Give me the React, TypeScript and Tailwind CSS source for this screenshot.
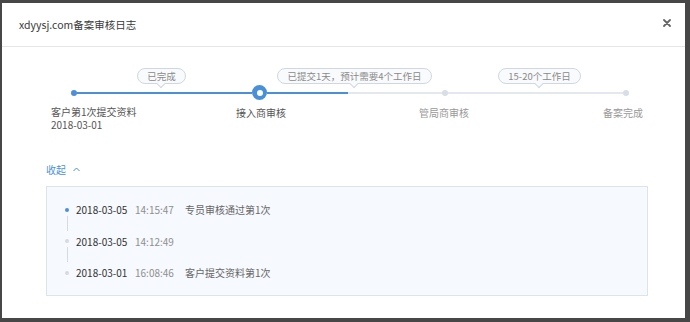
const steps = [
  { title: '客户第1次提交资料', date: '2018-03-01', done: true },
  { title: '接入商审核', date: '', done: true },
  { title: '管局商审核', date: '', done: false },
  { title: '备案完成', date: '', done: false },
];

const logs = [
  { date: '2018-03-05', time: '14:15:47', text: '专员审核通过第1次', active: true },
  { date: '2018-03-05', time: '14:12:49', text: '', active: false },
  { date: '2018-03-01', time: '16:08:46', text: '客户提交资料第1次', active: false },
];

function Bubble({ text, className = '' }: { text: string; className?: string }) {
  return (
    <div className={`relative h-[16px] px-[9px] rounded-full border border-[#cfd8e2] bg-[#f8fafc] text-[9.5px] leading-[14px] text-[#8a8a8a] whitespace-nowrap ${className}`}>
      {text}
      <span className="absolute left-1/2 -bottom-[4px] -ml-[3px] w-[6px] h-[6px] rotate-45 bg-[#f8fafc] border-r border-b border-[#cfd8e2]" />
    </div>
  );
}

export default function App() {
  return (
    <div
      className="w-[690px] h-[322px] bg-[#474747] pt-[3px] pl-[2px] overflow-hidden"
      style={{ fontFamily: '"Noto Sans CJK SC", "Noto Sans", sans-serif' }}
    >
      <div className="w-[683px] h-[315px] bg-white flex flex-col">
        {/* header */}
        <div className="h-[44px] border-b border-[#e6e6e6] flex items-center justify-between pl-[17px] pr-[14px]">
          <span className="text-[10.5px] text-[#3a3a3a] mt-[1px]">xdyysj.com备案审核日志</span>
          <svg width="8" height="8" viewBox="0 0 8 8" className="-mt-[3px]">
            <path d="M1 1 L7 7 M7 1 L1 7" stroke="#666" strokeWidth="1.8" strokeLinecap="round" />
          </svg>
        </div>

        {/* body */}
        <div className="pl-[44px] pr-[37px]">
          {/* bubbles */}
          <div className="mt-[21px] ml-[25px] w-[558px] flex">
            <div className="w-[6px]" />
            <div className="flex-1 flex justify-center">
              <Bubble text="已完成" className="mr-[6px]" />
            </div>
            <div className="w-[15px]" />
            <div className="flex-1 flex justify-center">
              <Bubble text="已提交1天，预计需要4个工作日" />
            </div>
            <div className="w-[6px]" />
            <div className="flex-1 flex justify-center">
              <Bubble text="15-20个工作日" className="ml-[8px]" />
            </div>
            <div className="w-[6px]" />
          </div>

          {/* track */}
          <div className="mt-[1px] ml-[25px] w-[558px] h-[15px] flex items-center">
            <span className="w-[6px] h-[6px] rounded-full bg-[#4a90d9]" />
            <span className="flex-1 h-[2px] bg-[#4a90d9]" />
            <span className="w-[15px] h-[15px] rounded-full bg-[#4a90d9] flex items-center justify-center">
              <span className="w-[6px] h-[6px] rounded-full bg-white" />
            </span>
            <span className="flex-1 h-[2px] flex">
              <span className="w-[81px] bg-[#4a90d9]" />
              <span className="flex-1 bg-[#e3e8ee]" />
            </span>
            <span className="w-[6px] h-[6px] rounded-full bg-[#d8dee5]" />
            <span className="flex-1 h-[2px] bg-[#e3e8ee]" />
            <span className="w-[6px] h-[6px] rounded-full bg-[#d8dee5]" />
          </div>

          {/* labels */}
          <div className="mt-[6px] flex text-[10px] leading-[13px]">
            <div className="ml-[5px] w-[160px] shrink-0 text-[#555] flex flex-col gap-[1px]">
              <span className="leading-[12px]">{steps[0].title}</span>
              <span className="leading-[12px]">{steps[0].date}</span>
            </div>
            <div className="w-[100px] shrink-0 text-center text-[#555]">{steps[1].title}</div>
            <div className="ml-[83px] w-[100px] shrink-0 text-center text-[#999]">{steps[2].title}</div>
            <div className="ml-[89px] w-[80px] shrink-0 text-center text-[#999]">{steps[3].title}</div>
          </div>

          {/* toggle */}
          <div className="mt-[32px] flex items-center gap-[7px] text-[10px] leading-[13px] text-[#4a90d9]">
            <span>收起</span>
            <svg width="7" height="5" viewBox="0 0 7 5">
              <path d="M0.5 4 L3.5 1 L6.5 4" fill="none" stroke="#4a90d9" strokeWidth="1" />
            </svg>
          </div>

          {/* log box */}
          <div className="mt-[10px] h-[110px] border border-[#dde3ea] bg-[#f6f9fd] pt-[16px] pl-[17px]">
            {logs.map((log, i) => (
              <div key={i} className={`flex items-start ${i < logs.length - 1 ? 'h-[31.5px]' : ''}`}>
                <div className="w-[6px] h-full flex flex-col items-center">
                  <span
                    className={`mt-[4.5px] w-[4px] h-[4px] rounded-full ${log.active ? 'bg-[#4a90d9]' : 'bg-[#d6dbe1]'}`}
                  />
                  {i < logs.length - 1 && <span className="flex-1 w-px bg-[#d6dbe1] my-[4px]" />}
                </div>
                <div className="ml-[6px] flex text-[10px] leading-[13px]">
                  <span className="text-[#333] w-[59px]">{log.date}</span>
                  <span className="text-[#8f8f8f] w-[50px]">{log.time}</span>
                  <span className="text-[#666]">{log.text}</span>
                </div>
              </div>
            ))}
          </div>
        </div>
      </div>
    </div>
  );
}
